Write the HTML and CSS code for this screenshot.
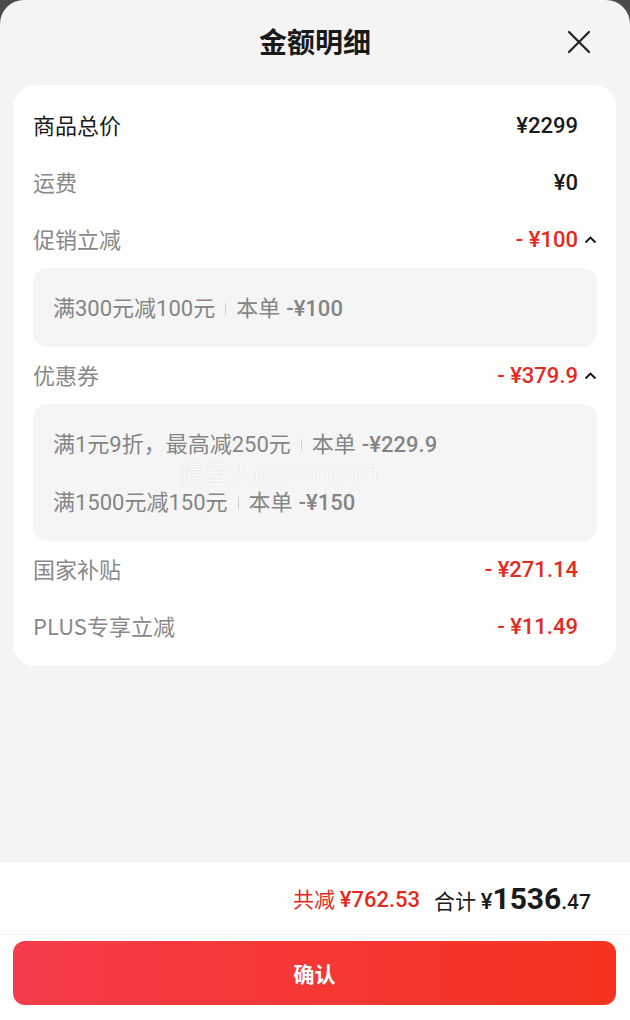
FILE: index.html
```html
<!DOCTYPE html>
<html lang="zh-CN">
<head>
    <meta charset="UTF-8">
    <meta name="viewport" content="width=device-width, initial-scale=1.0">
    <title>金额明细</title>
    <link rel="stylesheet" href="styles.css">
</head>
<body>
    <div class="sheet">
        <div class="sheet-header">
            <h1>金额明细</h1>
            <button class="close-btn" aria-label="关闭">
                <svg width="24" height="24" viewBox="0 0 24 24">
                    <path d="M2 2 L22 22 M22 2 L2 22" stroke="#222" stroke-width="2.2" fill="none" stroke-linecap="round"/>
                </svg>
            </button>
        </div>

        <div class="detail-card">
            <div class="row">
                <span class="label strong">商品总价</span>
                <span class="amount">¥2299</span>
            </div>
            <div class="row">
                <span class="label">运费</span>
                <span class="amount">¥0</span>
            </div>
            <div class="row">
                <span class="label">促销立减</span>
                <span class="amount minus toggle">- ¥100
                    <svg class="caret" width="13" height="9" viewBox="0 0 13 9"><path d="M1.5 7.5 L6.5 2.5 L11.5 7.5" stroke="#111" stroke-width="1.8" fill="none"/></svg>
                </span>
            </div>
            <div class="sub-box">
                <p class="sub-line">满300元减100元<i class="sep"></i>本单 <em>-¥100</em></p>
            </div>
            <div class="row">
                <span class="label">优惠券</span>
                <span class="amount minus toggle">- ¥379.9
                    <svg class="caret" width="13" height="9" viewBox="0 0 13 9"><path d="M1.5 7.5 L6.5 2.5 L11.5 7.5" stroke="#111" stroke-width="1.8" fill="none"/></svg>
                </span>
            </div>
            <div class="sub-box">
                <p class="sub-line">满1元9折，最高减250元<i class="sep"></i>本单 <em>-¥229.9</em></p>
                <p class="sub-line">满1500元减150元<i class="sep"></i>本单 <em>-¥150</em></p>
                <span class="watermark">慢星人6383108BT</span>
            </div>
            <div class="row">
                <span class="label">国家补贴</span>
                <span class="amount minus">- ¥271.14</span>
            </div>
            <div class="row">
                <span class="label">PLUS专享立减</span>
                <span class="amount minus">- ¥11.49</span>
            </div>
        </div>

        <div class="spacer"></div>

        <div class="footer">
            <div class="summary">
                <span class="saved">共减 <b>¥762.53</b></span>
                <span class="total">合计 <span class="yen">¥</span><span class="int">1536</span><span class="dec">.47</span></span>
            </div>
            <div class="action">
                <button class="confirm-btn">确认</button>
            </div>
        </div>
    </div>
</body>
</html>
```

FILE: styles.css
```css
html, body {
    height: 100%;
}

body {
    margin: 0;
    background: #4b4b4b;
    font-family: Roboto, "Noto Sans CJK SC", sans-serif;
    color: #1a1a1a;
}

.sheet {
    height: 100%;
    display: flex;
    flex-direction: column;
    background: #f4f4f4;
    border-radius: 24px 24px 0 0;
    overflow: hidden;
}

.sheet-header {
    position: relative;
    height: 85px;
    display: flex;
    align-items: center;
    justify-content: center;
}

.sheet-header h1 {
    margin: -3px 0 0;
    font-size: 28px;
    font-weight: 700;
    color: #1a1a1a;
    font-family: "Noto Sans CJK SC", sans-serif;
}

.close-btn {
    position: absolute;
    right: 39px;
    top: 30px;
    padding: 0;
    border: none;
    background: none;
    width: 24px;
    height: 24px;
}

.detail-card {
    margin: 0 14px 0 13px;
    padding: 12px 0 11px;
    background: #fff;
    border-radius: 22px;
}

.row {
    height: 57px;
    display: flex;
    align-items: center;
    justify-content: space-between;
    padding: 0 19px 0 20px;
}

.label {
    font-size: 22px;
    color: #888;
    font-family: "Noto Sans CJK SC", sans-serif;
    line-height: 1;
    margin-top: -3px;
}

.label.strong {
    color: #1a1a1a;
}

.amount {
    display: flex;
    align-items: center;
    font-size: 22px;
    font-weight: 500;
    color: #1a1a1a;
    padding-right: 19px;
    line-height: 1;
}

.amount.minus {
    color: #e5291f;
}

.amount.toggle {
    padding-right: 0;
}

.caret {
    margin-left: 6px;
}

.sub-box {
    position: relative;
    margin: 0 19px 0 20px;
    padding: 12px 20px 9px;
    background: #f5f5f5;
    border-radius: 14px;
}

.sub-line {
    margin: 0;
    line-height: 58px;
    font-size: 22px;
    color: #858585;
    display: flex;
    align-items: center;
}

.sub-line em {
    font-style: normal;
    font-weight: 500;
    margin-left: 6px;
}

.sep {
    display: inline-block;
    width: 1px;
    height: 12px;
    background: #cfcfcf;
    margin: 0 10px;
}

.watermark {
    position: absolute;
    left: 146px;
    top: 58px;
    font-size: 25px;
    line-height: 28px;
    color: rgba(255, 255, 255, 0.9);
    text-shadow: 0 0 1px rgba(0, 0, 0, 0.15);
    pointer-events: none;
}

.spacer {
    flex: 1;
}

.footer {
    background: #fff;
}

.summary {
    height: 72px;
    display: flex;
    align-items: center;
    justify-content: flex-end;
    gap: 14px;
    padding-right: 39px;
    border-bottom: 1px solid #f0f0f0;
}

.saved {
    font-size: 21px;
    color: #e5291f;
    font-family: "Noto Sans CJK SC", sans-serif;
}

.saved b {
    font-family: Roboto, sans-serif;
    font-weight: 500;
    font-size: 22px;
}

.total {
    font-size: 21px;
    color: #1a1a1a;
    font-family: "Noto Sans CJK SC", sans-serif;
}

.total .yen {
    font-family: Roboto, sans-serif;
    font-size: 22px;
    font-weight: 500;
}

.total .int {
    font-family: Roboto, sans-serif;
    font-size: 30px;
    font-weight: 700;
}

.total .dec {
    font-family: Roboto, sans-serif;
    font-size: 21px;
    font-weight: 500;
}

.action {
    padding: 6px 14px 15px 13px;
}

.confirm-btn {
    width: 100%;
    height: 64px;
    border: none;
    border-radius: 12px;
    background: linear-gradient(90deg, #f63c4b 0%, #f5331f 100%);
    color: #fff;
    font-size: 21px;
    font-weight: 700;
    font-family: "Noto Sans CJK SC", sans-serif;
}
```
